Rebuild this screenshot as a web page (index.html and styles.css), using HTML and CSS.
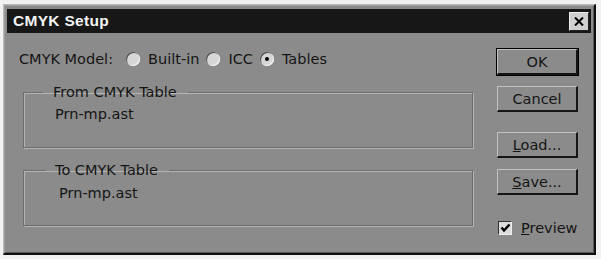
FILE: index.html
```html
<!DOCTYPE html>
<html>
<head>
<meta charset="utf-8">
<link rel="stylesheet" href="styles.css">
</head>
<body>
<div class="window">
  <div class="titlebar">
    <span class="title">CMYK Setup</span>
    <span class="close">
      <svg width="10" height="9" viewBox="0 0 10 9"><path d="M1 0.5 L9 8.5 M9 0.5 L1 8.5" stroke="#000" stroke-width="2"/></svg>
    </span>
  </div>
  <div class="content">
    <div class="left">
      <div class="model-row">
        <span class="model-label">CMYK Model:</span>
        <span class="radio"><span class="dot"></span></span><span class="opt">Built-in</span>
        <span class="radio"><span class="dot"></span></span><span class="opt">ICC</span>
        <span class="radio checked"><span class="dot"></span></span><span class="opt">Tables</span>
      </div>
      <fieldset class="group g1">
        <legend>From CMYK Table</legend>
        <div class="file">Prn-mp.ast</div>
      </fieldset>
      <fieldset class="group g2">
        <legend>To CMYK Table</legend>
        <div class="file">Prn-mp.ast</div>
      </fieldset>
    </div>
    <div class="right">
      <button class="btn default">OK</button>
      <button class="btn">Cancel</button>
      <button class="btn b-load"><u>L</u>oad...</button>
      <button class="btn"><u>S</u>ave...</button>
      <div class="check-row">
        <span class="checkbox"><svg width="11" height="10" viewBox="0 0 11 10"><path d="M1.5 4.5 L4 7.5 L9.5 1.5" stroke="#000" stroke-width="2.4" fill="none"/></svg></span>
        <span class="check-label"><u>P</u>review</span>
      </div>
    </div>
  </div>
</div>
</body>
</html>
```
FILE: styles.css
```css
html, body {
  margin: 0;
  padding: 0;
  background: #f2f2f2;
}
body {
  width: 601px;
  height: 259px;
  font-family: "DejaVu Sans", "Liberation Sans", sans-serif;
  font-size: 14.5px;
  color: #151515;
  padding: 4px 0 0 3px;
  box-sizing: border-box;
}
.window {
  width: 593px;
  height: 251px;
  box-sizing: border-box;
  background: #8b8b8b;
  border-top: 1px solid #b8b8b8;
  border-left: 1px solid #b8b8b8;
  border-right: 2px solid #111;
  border-bottom: 2px solid #111;
  box-shadow: inset 1px 1px 0 #a0a0a0, inset -1px -1px 0 #5a5a5a;
  padding: 4px 3px 0 3px;
  display: flex;
  flex-direction: column;
}
.titlebar {
  height: 24px;
  flex: none;
  background: #171717;
  display: flex;
  align-items: center;
  justify-content: space-between;
  padding: 0 2px 0 6px;
}
.title {
  color: #f4f4f4;
  font-family: "Liberation Sans", sans-serif;
  font-weight: bold;
  font-size: 15.5px;
  letter-spacing: 0.3px;
}
.close {
  width: 20px;
  height: 19px;
  box-sizing: border-box;
  background: #cfcfcf;
  border-top: 1px solid #eee;
  border-left: 1px solid #eee;
  border-right: 1px solid #222;
  border-bottom: 1px solid #222;
  display: flex;
  align-items: center;
  justify-content: center;
}
.content {
  flex: 1;
  display: flex;
  padding: 0 0 0 12px;
}
.left {
  width: 454px;
  display: flex;
  flex-direction: column;
}
.model-row {
  display: flex;
  align-items: center;
  height: 20px;
  margin-top: 16px;
}
.model-label {
  margin-right: 13px;
}
.radio {
  width: 14px;
  height: 14px;
  border-radius: 50%;
  background: #d6d6d6;
  box-shadow: inset 1px 1px 0 #4a4a4a, inset -1px -1px 0 #f2f2f2;
  margin-right: 8px;
  display: flex;
  align-items: center;
  justify-content: center;
  flex: none;
}
.radio .dot {
  width: 4px;
  height: 4px;
  border-radius: 50%;
  background: transparent;
}
.radio.checked .dot {
  background: #000;
}
.opt {
  margin-right: 7px;
}
.group {
  margin: 0 0 0 4px;
  padding: 0 0 0 31px;
  width: 450px;
  box-sizing: border-box;
  border: 1px solid #6c6c6c;
  box-shadow: 1px 1px 0 #b4b4b4, inset 1px 1px 0 #b4b4b4;
  min-width: 0;
}
.group legend {
  padding: 0 11px 0 10px;
  margin-left: -12px;
}
.g1 {
  margin-top: 15px;
  height: 64px;
}
.g2 {
  margin-top: 14px;
  height: 64px;
}
.g2 legend {
  margin-left: -10px;
}
.file {
  margin-top: 6px;
}
.g2 .file {
  margin-top: 7px;
  padding-left: 4px;
}
.right {
  display: flex;
  flex-direction: column;
  margin-left: 24px;
  padding-top: 16px;
}
.btn {
  width: 81px;
  height: 26px;
  box-sizing: border-box;
  font-family: inherit;
  font-size: 14.5px;
  color: #151515;
  background: #8b8b8b;
  border-top: 1px solid #c2c2c2;
  border-left: 1px solid #c2c2c2;
  border-right: 2px solid #151515;
  border-bottom: 2px solid #151515;
  padding: 0;
  margin-bottom: 11px;
  flex: none;
}
.btn.default {
  outline: 1px solid #000;
}
.btn.b-load {
  margin-top: 9px;
}
.check-row {
  display: flex;
  align-items: center;
  margin-top: 14px;
  margin-left: 1px;
}
.checkbox {
  width: 14px;
  height: 14px;
  box-sizing: border-box;
  background: #dcdcdc;
  border-top: 1px solid #333;
  border-left: 1px solid #333;
  border-right: 1px solid #f0f0f0;
  border-bottom: 1px solid #f0f0f0;
  display: flex;
  align-items: center;
  justify-content: center;
  margin-right: 9px;
}
```
